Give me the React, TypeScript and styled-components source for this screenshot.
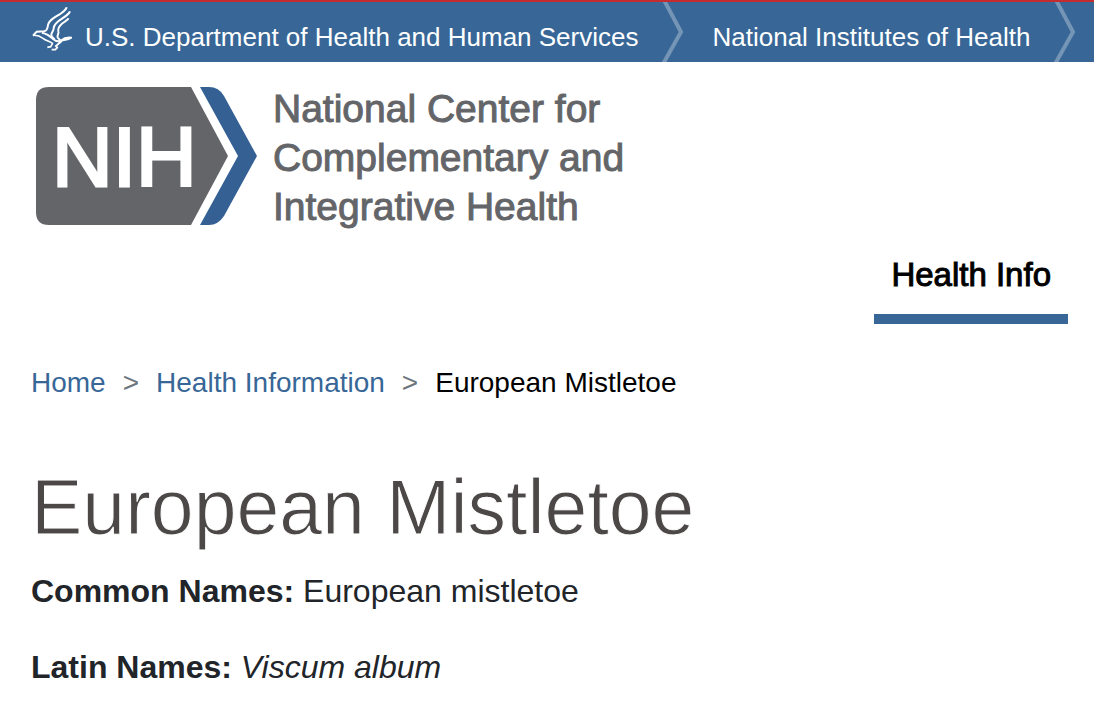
import React from "react";
import styled, { createGlobalStyle } from "styled-components";

const BLUE = "#386797";

const GlobalStyle = createGlobalStyle`
  *, *::before, *::after { box-sizing: border-box; }
  body {
    margin: 0;
    background: #fff;
    color: #212529;
    font-family: "Liberation Sans", Arial, Helvetica, sans-serif;
    font-size: 32px;
    line-height: 48px;
  }
`;

const Page = styled.div`
  overflow-x: hidden;
`;

const TopBar = styled.nav`
  display: flex;
  height: 62px;
  padding-left: 32px;
  border-top: 2px solid #c32d32;
  background: ${BLUE};
  white-space: nowrap;
`;

const Agency = styled.a`
  display: flex;
  gap: 13px;
  color: #fff;
  font-size: 26px;
  line-height: 40px;
  text-decoration: none;
`;

const AgencyName = styled.span`
  padding-top: 15px;
`;

const EagleIcon = styled.svg`
  width: 40px;
  height: 46px;
  margin-top: 4px;
  flex: none;
`;

const ChevronIcon = styled.svg`
  width: 22px;
  height: 60px;
  flex: none;
  margin: 0 28px 0 24px;
`;

const Header = styled.header`
  display: flex;
  padding: 22px 32px 0 36px;
`;

const Brand = styled.a`
  display: flex;
  align-items: center;
  gap: 15px;
  color: #646569;
  text-decoration: none;
`;

const NihLogo = styled.svg`
  width: 222px;
  height: 142px;
  flex: none;
`;

const BrandName = styled.span`
  display: block;
  font-size: 39px;
  line-height: 49px;
  -webkit-text-stroke: 1px #646569;
`;

const MainNav = styled.nav`
  display: flex;
  justify-content: flex-end;
  padding-right: 26px;
`;

const NavTab = styled.a`
  padding: 24px 17px 20px;
  border-bottom: 10px solid ${BLUE};
  color: #000;
  font-size: 33px;
  line-height: 39px;
  text-decoration: none;
  -webkit-text-stroke: 1px #000;
`;

const Main = styled.main`
  padding: 0 31px 24px;
`;

const Breadcrumb = styled.ol`
  display: flex;
  flex-wrap: wrap;
  gap: 17px;
  margin: 39px 0 0;
  padding: 0;
  list-style: none;
  font-size: 28px;
  line-height: 40px;
`;

const Crumb = styled.li`
  display: flex;
  gap: 17px;
  color: #000;

  & + &::before {
    content: ">";
    color: #6c757d;
  }
`;

const CrumbLink = styled.a`
  color: ${BLUE};
  text-decoration: none;
`;

const Title = styled.h1`
  margin: 59px 0 15px;
  color: #4d4848;
  font-size: 77px;
  font-weight: 400;
  line-height: 90px;
  -webkit-text-stroke: 1px #fff;
`;

const Names = styled.p`
  margin: 0 0 28px;
`;

function Eagle() {
  return (
    <EagleIcon viewBox="0 0 120 138" fill="none" stroke="#fff" aria-hidden="true">
      <path d="M104 4c-2 9-10 14-21 21C65 36 50 43 48 57c-1 10-5 18-12 19l-22 1L3 89" strokeWidth="6" />
      <path d="M114 16c-3 8-12 14-23 21-16 10-26 19-26 30 0 8-6 12-7 18-1 7 4 10 10 15" strokeWidth="6" />
      <path d="M110 37c-6 7-13 11-21 17-9 8-12 14-10 22 3 8-5 11-2 18 2 4 6 6 9 10" strokeWidth="6" />
      <path d="M3 88c12-1 21 2 30 9 10 8 20 8 30 16" strokeWidth="5" />
      <path d="M30 80c14 3 23 9 32 18 9 8 14 10 24 6 10-8 20-11 32-9-8 6-16 6-28 8-7 10-16 12-18 19" strokeWidth="6" />
      <path d="M62 112l-6 10-10 2m24-6 6 7-6 6H59" strokeWidth="5" />
    </EagleIcon>
  );
}

function Chevron() {
  return (
    <ChevronIcon viewBox="0 0 22 60" fill="none" aria-hidden="true">
      <path d="M2 -2L19 30L1 62" stroke="#fff" strokeOpacity=".3" strokeWidth="4" />
    </ChevronIcon>
  );
}

export default function App() {
  return (
    <Page>
      <GlobalStyle />
      <TopBar aria-label="Parent organizations">
        <Agency href="#hhs">
          <Eagle />
          <AgencyName>U.S. Department of Health and Human Services</AgencyName>
        </Agency>
        <Chevron />
        <Agency href="#nih">
          <AgencyName>National Institutes of Health</AgencyName>
        </Agency>
        <Chevron />
      </TopBar>
      <Header>
        <Brand href="#home">
          <NihLogo viewBox="0 0 222 142" aria-hidden="true">
            <path d="M13 0H155L192 69L155 138H13Q0 138 0 125V13Q0 0 13 0Z" fill="#646569" />
            <path d="M164 0H173Q183 0 188 9L221 69L188 129Q182 138 173 138H164L202 69Z" fill="#346094" />
            <text
              x="16"
              y="99"
              fill="#fff"
              stroke="#fff"
              strokeWidth="3"
              fontFamily="Liberation Sans, Arial, sans-serif"
              fontSize="84"
            >
              NIH
            </text>
          </NihLogo>
          <BrandName>
            National Center for
            <br />
            Complementary and
            <br />
            Integrative Health
          </BrandName>
        </Brand>
      </Header>
      <MainNav aria-label="Main">
        <NavTab href="#health-info">Health Info</NavTab>
      </MainNav>
      <Main>
        <nav aria-label="Breadcrumb">
          <Breadcrumb>
            <Crumb>
              <CrumbLink href="#home">Home</CrumbLink>
            </Crumb>
            <Crumb>
              <CrumbLink href="#health">Health Information</CrumbLink>
            </Crumb>
            <Crumb aria-current="page">European Mistletoe</Crumb>
          </Breadcrumb>
        </nav>
        <Title>European Mistletoe</Title>
        <Names>
          <strong>Common Names:</strong> European mistletoe
        </Names>
        <Names>
          <strong>Latin Names:</strong> <em>Viscum album</em>
        </Names>
      </Main>
    </Page>
  );
}
